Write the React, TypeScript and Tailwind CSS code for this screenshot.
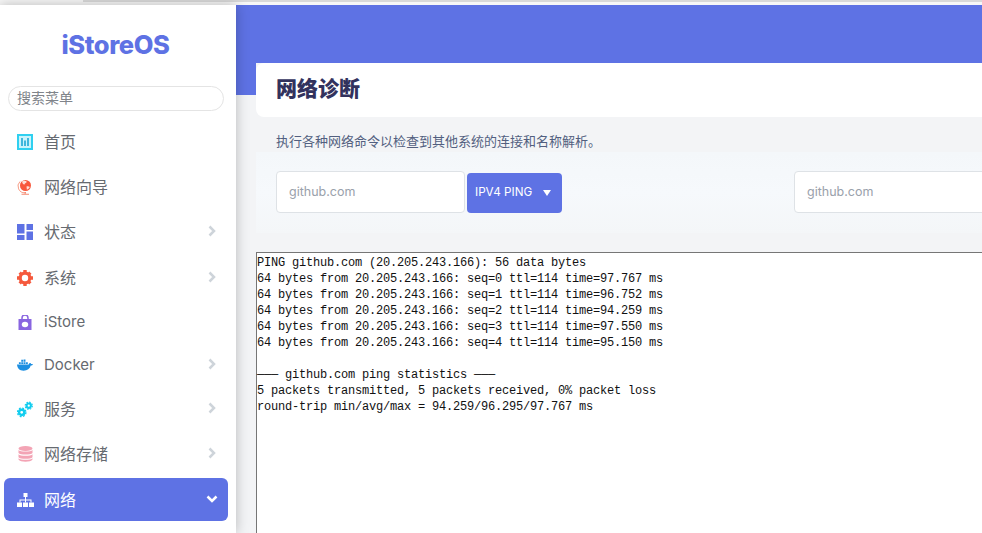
import React from 'react';

const sansFont = { fontFamily: 'Inter, "Noto Sans CJK SC", sans-serif' };

const HomeIcon = () => (
  <svg width="16" height="16" viewBox="0 0 16 16">
    <rect x="1" y="1" width="14" height="14" fill="#c9f3fb" stroke="#2fd0f0" strokeWidth="2" />
    <path d="M4 4h2v8H4zM7 6.500h2V12H7zM10 4h2v8h-2z" fill="#3fb6dc" />
  </svg>
);

const GlobeIcon = () => (
  <svg width="16" height="16" viewBox="0 0 16 16">
    <path d="M3 2.500a6.600 6.600 0 0 0 5 11.300" fill="none" stroke="#f79b84" strokeWidth="1" />
    <circle cx="8.500" cy="6.500" r="5.500" fill="#f8583c" />
    <path d="M5 2.500c1.800-1 3.800-1 4.800.3-.3 1.500-1.800 1.200-2.300 2.700-1 .5-2.100-1-2.500-3zM9.500 7.500c1.200-.5 2.600-.2 3.300.6-.7 1.400-1.800 2.300-2.900 2.600z" fill="#fde0d8" />
    <path d="M7.500 13h1.500v1.500H7.500zM4.500 14.800h7.500v1H4.500z" fill="#f58a72" />
  </svg>
);

const StatusIcon = () => (
  <svg width="16" height="16" viewBox="0 0 16 16" fill="#5e72e4">
    <path d="M0 0h7.500v9.500H0zM9.500 0H16v6H9.500zM0 11h7.500v5H0zM9.500 7.500H16V16H9.500z" />
  </svg>
);

const GearIcon = () => (
  <svg width="16" height="16" viewBox="0 0 16 16">
    <circle cx="8" cy="8" r="4.800" fill="none" stroke="#f5593d" strokeWidth="3.200" />
    <path d="M6.300 0h3.400v3H6.300zM6.300 13h3.400v3H6.300zM0 6.300h3v3.400H0zM13 6.300h3v3.400h-3z" fill="#f5593d" />
    <path d="M1.500 3.800l2.300-2.300 2 2-2.300 2.300zM10.200 12.500l2.300-2.300 2 2-2.300 2.300zM12.200 1.500l2.300 2.300-2 2-2.300-2.300zM3.500 10.200l2.300 2.300-2 2-2.300-2.300z" fill="#f5593d" />
  </svg>
);

const BagIcon = () => (
  <svg width="14" height="15" viewBox="0 0 14 15">
    <path d="M.5 4h13v11H.5z" fill="#8965e0" />
    <path d="M4 5V3a3 3 0 0 1 6 0v2" fill="none" stroke="#8965e0" strokeWidth="1.500" />
    <ellipse cx="7" cy="9.500" rx="3.200" ry="2.700" fill="#fff" />
  </svg>
);

const DockerIcon = () => (
  <svg width="17" height="12" viewBox="0 0 17 12" fill="#1d8fe1">
    <path d="M0 5.500h12.500c.3-1.200 1-1.800 1.800-1.500.4.400.6.700.7 1 .6-.2 1.300-.1 2 .3-.5 1-1.400 1.400-2.400 1.300C13.700 10 11 12 7 12 2.500 12 .3 9.500 0 5.500z" />
    <path d="M2 3h2v2H2zM4.500 3h2v2h-2zM7 3h2v2H7zM9.500 3h2v2h-2zM7 .5h2v2H7zM4.500.5h2v2h-2zM7-1.500h2V0H7z" />
  </svg>
);

const ServiceIcon = () => (
  <svg width="17" height="17" viewBox="0 0 17 17" fill="none" stroke="#11cdef">
    <circle cx="5" cy="11.500" r="2.800" strokeWidth="2.600" />
    <circle cx="5" cy="11.500" r="4.500" strokeWidth="1.400" strokeDasharray="2 1.530" />
    <circle cx="12.500" cy="4.500" r="2.300" strokeWidth="2.200" />
    <circle cx="12.500" cy="4.500" r="3.800" strokeWidth="1.200" strokeDasharray="1.700 1.280" />
  </svg>
);

const DatabaseIcon = () => (
  <svg width="15" height="16" viewBox="0 0 15 16" fill="#f3a4b5">
    <ellipse cx="7.500" cy="2.500" rx="7" ry="2.500" />
    <path d="M.5 4C2 6 13 6 14.500 4V7C13 9 2 9 .5 7zM.5 8.200C2 10.200 13 10.200 14.500 8.200V11.200C13 13.200 2 13.200.5 11.200zM.5 12.200C2 14.200 13 14.200 14.500 12.200V13.500C13 16.500 2 16.500.5 13.500z" />
  </svg>
);

const NetworkIcon = () => (
  <svg width="17" height="14" viewBox="0 0 17 14" fill="#fff">
    <path d="M6.500 0h4v4h-4zM8 4h1v3H8z" />
    <path d="M2.500 6.500h12v3h-1v-2h-4.500v2H8v-2H3.500v2h-1z" />
    <path d="M0 9.500h5V14H0zM6 9.500h5V14H6zM12 9.500h5V14h-5z" />
  </svg>
);

const ChevronRight = () => (
  <svg width="8" height="12" viewBox="0 0 8 12" fill="none" stroke="#ced4da" strokeWidth="2.500" className="mb-[2px]">
    <path d="M1.500 1.500L6 6l-4.500 4.500" />
  </svg>
);

const ChevronDown = () => (
  <svg width="12" height="8" viewBox="0 0 12 8" fill="none" stroke="#fff" strokeWidth="2.500" className="mb-[2px]">
    <path d="M1.500 1.500L6 6l4.500-4.500" />
  </svg>
);

const menuItems = [
  { label: '首页', icon: <HomeIcon />, height: 'h-[45px]', text: 'text-[16px]', arrow: false },
  { label: '网络向导', icon: <GlobeIcon />, height: 'h-[45px]', text: 'text-[16px]', arrow: false },
  { label: '状态', icon: <StatusIcon />, height: 'h-[46px]', text: 'text-[16px]', arrow: true },
  { label: '系统', icon: <GearIcon />, height: 'h-[45px]', text: 'text-[16px]', arrow: true },
  { label: 'iStore', icon: <BagIcon />, height: 'h-[44px]', text: 'text-[15px]', arrow: false },
  { label: 'Docker', icon: <DockerIcon />, height: 'h-[42px]', text: 'text-[15px]', arrow: true },
  { label: '服务', icon: <ServiceIcon />, height: 'h-[46px]', text: 'text-[16px]', arrow: true },
  { label: '网络存储', icon: <DatabaseIcon />, height: 'h-[44px]', text: 'text-[16px]', arrow: true },
];

const pingOutput = `PING github.com (20.205.243.166): 56 data bytes
64 bytes from 20.205.243.166: seq=0 ttl=114 time=97.767 ms
64 bytes from 20.205.243.166: seq=1 ttl=114 time=96.752 ms
64 bytes from 20.205.243.166: seq=2 ttl=114 time=94.259 ms
64 bytes from 20.205.243.166: seq=3 ttl=114 time=97.550 ms
64 bytes from 20.205.243.166: seq=4 ttl=114 time=95.150 ms

─── github.com ping statistics ───
5 packets transmitted, 5 packets received, 0% packet loss
round-trip min/avg/max = 94.259/96.295/97.767 ms`;

export default function App() {
  return (
    <div className="w-[982px] h-[533px] overflow-hidden bg-[#f3f4f6] flex flex-col" style={sansFont}>
      {/* Top strip */}
      <div className="h-[5px] shrink-0 bg-[#f7f7f7]">
        <div className="ml-[83px] h-[2px] bg-[#d9d9d9]" />
      </div>

      <div className="flex flex-1 min-h-0">
        {/* Sidebar */}
        <aside className="w-[236px] shrink-0 bg-white shadow-[0_0_12px_rgba(0,0,0,0.25)] z-10">
          <div className="h-[80px] flex items-center justify-center pr-[5px]">
            <span className="text-[25.5px] font-extrabold text-[#5e72e4] tracking-[-0.4px]">iStoreOS</span>
          </div>

          <div className="px-2 h-[26px] pt-[1px]">
            <div className="h-[25px] w-[216px] rounded-full border border-[#e4e4e4] flex items-center pl-[8px] pb-[2px] text-[14px] text-[#80848a]">
              搜索菜单
            </div>
          </div>

          <nav className="mt-[8px]">
            {menuItems.map((item) => (
              <div key={item.label} className={`${item.height} flex items-center pl-[17px] pr-[20px]`}>
                <span className="w-[16px] flex justify-center">{item.icon}</span>
                <span className={`ml-[11px] flex-1 ${item.text} text-[#666a70]`}>{item.label}</span>
                {item.arrow && <ChevronRight />}
              </div>
            ))}
            {/* Active item */}
            <div className="w-[224px] ml-1 mt-[2px] h-[43px] rounded-[6px] bg-[#5e72e4] flex items-center pl-[13px] pr-[10px]">
              <span className="w-[17px] flex justify-center"><NetworkIcon /></span>
              <span className="ml-[10px] flex-1 text-[16px] text-white">网络</span>
              <ChevronDown />
            </div>
          </nav>
        </aside>

        {/* Main content */}
        <main className="flex-1 min-w-0">
          <div className="h-[58px] bg-[#5e72e4]" />
          <div className="h-[32px] w-[20px] bg-[#5e72e4]" />

          <div className="mt-[-32px] pl-[20px]">
            <div className="w-[760px] h-[54px] bg-white rounded-l-[8px] flex items-center pl-[20px] pb-[2px]">
              <h1 className="text-[21px] font-black text-[#32325d]">网络诊断</h1>
            </div>
            <p className="mt-[15px] pl-[20px] text-[13px] leading-[18px] text-[#525f7f]">
              执行各种网络命令以检查到其他系统的连接和名称解析。
            </p>
            <div className="mt-[2px] h-[81px] bg-linear-to-b from-[#f4f7fa] via-[#f6f9fc] to-[#f4f6f8] pl-[20px] flex items-center">
              <div className="w-[189px] shrink-0 h-[42px] rounded-[4px] border border-[#dee2e6] bg-white flex items-center pl-[12px] pt-[1px] text-[12.5px] text-[#9aa1ab] mt-[-2px]">
                github.com
              </div>
              <div className="ml-[2px] w-[95px] shrink-0 h-[40px] rounded-[4px] bg-[#5e72e4] flex items-center pl-[8px] text-[11.7px] text-white">
                IPV4 PING
                <span className="ml-[11px] w-0 h-0 border-x-[4px] border-x-transparent border-t-[6px] border-t-white" />
              </div>
              <div className="ml-[232px] w-[220px] shrink-0 h-[42px] rounded-[4px] border border-[#dee2e6] bg-white flex items-center pl-[12px] pt-[1px] text-[12.5px] text-[#9aa1ab] mt-[-2px]">
                github.com
              </div>
            </div>
            <pre
              className="mt-[19px] w-[760px] h-[300px] border border-[#767676] bg-white pt-[2px] text-[12px] leading-[16px] tracking-[-0.2px] text-[#111]"
              style={{ fontFamily: '"Liberation Mono", monospace' }}
            >
              {pingOutput}
            </pre>
          </div>
        </main>
      </div>
    </div>
  );
}
